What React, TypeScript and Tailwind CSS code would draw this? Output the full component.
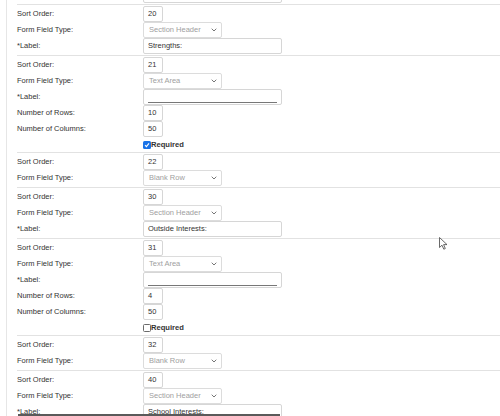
import React from "react";

type Field =
  | { kind: "header"; sort: string; label: string }
  | { kind: "area"; sort: string; rows: string; cols: string; required: boolean }
  | { kind: "blank"; sort: string };

const fields: Field[] = [
  { kind: "header", sort: "20", label: "Strengths:" },
  { kind: "area", sort: "21", rows: "10", cols: "50", required: true },
  { kind: "blank", sort: "22" },
  { kind: "header", sort: "30", label: "Outside Interests:" },
  { kind: "area", sort: "31", rows: "4", cols: "50", required: false },
  { kind: "blank", sort: "32" },
  { kind: "header", sort: "40", label: "School Interests:" },
];

const typeName = { header: "Section Header", area: "Text Area", blank: "Blank Row" };

function Row({ label, children }: { label: string; children: React.ReactNode }) {
  return (
    <div className="flex h-[16px] items-center">
      <div className="w-[126px] text-[7.5px] text-[#333]">{label}</div>
      {children}
    </div>
  );
}

function NumBox({ value }: { value: string }) {
  return (
    <div className="flex h-[16px] w-[20px] items-center rounded-[2px] border border-[#d6d6d6] bg-white pl-[4px] text-[7.5px] text-[#333]">
      {value}
    </div>
  );
}

function SelectBox({ value }: { value: string }) {
  return (
    <div className="flex h-[16px] w-[79px] items-center justify-between rounded-[2px] border border-[#dcdcdc] bg-white pl-[5px] pr-[4px] text-[7.5px] text-[#a0a0a0]">
      <span>{value}</span>
      <svg width="6" height="4" viewBox="0 0 6 4" fill="none">
        <path d="M0.7 0.7L3 3L5.3 0.7" stroke="#666" strokeWidth="0.9" />
      </svg>
    </div>
  );
}

function TextBox({ value, underline }: { value?: string; underline?: boolean }) {
  return (
    <div className="flex h-[16px] w-[139px] items-center rounded-[2px] border border-[#d6d6d6] bg-white px-[4px] text-[7.5px] text-[#333]">
      {underline ? <div className="mt-[10px] w-full border-b border-[#777]" /> : value}
    </div>
  );
}

function Section({ f }: { f: Field }) {
  return (
    <div className="border-t border-[#e2e2e2] pt-[1px] pb-[1px]">
      <Row label="Sort Order:">
        <NumBox value={f.sort} />
      </Row>
      <Row label="Form Field Type:">
        <SelectBox value={typeName[f.kind]} />
      </Row>
      {f.kind === "header" && (
        <Row label="*Label:">
          <TextBox value={f.label} />
        </Row>
      )}
      {f.kind === "area" && (
        <>
          <Row label="*Label:">
            <TextBox underline />
          </Row>
          <Row label="Number of Rows:">
            <NumBox value={f.rows} />
          </Row>
          <Row label="Number of Columns:">
            <NumBox value={f.cols} />
          </Row>
          <div className="-mb-[1px] flex h-[15px] items-center pl-[126px]">
            {f.required ? (
              <div className="flex h-[8px] w-[8px] items-center justify-center rounded-[1.5px] bg-[#1a73e8]">
                <svg width="6" height="6" viewBox="0 0 6 6" fill="none">
                  <path d="M1 3.2L2.4 4.6L5 1.4" stroke="#fff" strokeWidth="1.1" />
                </svg>
              </div>
            ) : (
              <div className="h-[8px] w-[8px] rounded-[1.5px] border border-[#6b6b6b] bg-white" />
            )}
            <span className="text-[7.6px] font-bold text-[#333]">Required</span>
          </div>
        </>
      )}
    </div>
  );
}

export default function App() {
  return (
    <div className="relative h-[416px] overflow-hidden bg-white font-['Liberation_Sans',Arial,sans-serif]">
      <div className="ml-[6px] h-full border-l border-[#e6e6e6] pl-[10px]">
        {/* tail of the previous field, scrolled off the top */}
        <div className="flex h-[4px] items-end overflow-hidden pb-[1px] pl-[126px]">
          <div className="h-[16px] w-[139px] shrink-0 rounded-[2px] border border-[#d6d6d6]" />
        </div>
        {fields.map((f) => (
          <Section key={f.sort} f={f} />
        ))}
      </div>

      {/* dark strip at the bottom edge */}
      <div className="absolute left-[18px] top-[414px] h-[2px] w-[262px] bg-[#5a5a5a]" />

      {/* mouse pointer */}
      <svg className="absolute left-[439px] top-[237px]" width="9" height="13" viewBox="0 0 9 13">
        <path d="M0.5 0.5V10.5L3 8.2L4.8 12.2L6.3 11.5L4.6 7.6H8L0.5 0.5Z" fill="#fff" stroke="#444" strokeWidth="0.8" strokeLinejoin="round" />
      </svg>
    </div>
  );
}
